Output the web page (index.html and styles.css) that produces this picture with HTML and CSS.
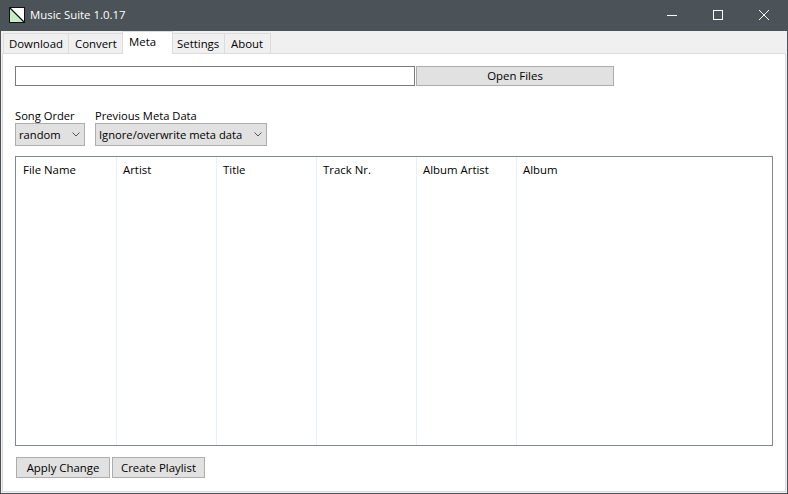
FILE: index.html
```html
<!DOCTYPE html>
<html>

<head>
    <meta charset="utf-8" />
    <title>Music Suite 1.0.17</title>
    <link rel="stylesheet" href="styles.css">
</head>

<body>
    <div class="window">
        <div class="titlebar">
            <svg class="app-icon" width="16" height="16" viewBox="0 0 16 16">
                <rect x="0.5" y="0.5" width="15" height="15" fill="#fff" stroke="#111" />
                <path d="M1 2 L14 15 L1 15 Z" fill="#c4eec4" />
                <path d="M1 1 L15 15" stroke="#111" stroke-width="1.2" />
            </svg>
            <span class="title">Music Suite 1.0.17</span>
            <div class="win-btn">
                <svg width="10" height="10" viewBox="0 0 10 10"><path d="M0 5.5 H10" stroke="#fff" /></svg>
            </div>
            <div class="win-btn">
                <svg width="10" height="10" viewBox="0 0 10 10"><rect x="0.5" y="0.5" width="9" height="9" fill="none" stroke="#fff" /></svg>
            </div>
            <div class="win-btn">
                <svg width="10" height="10" viewBox="0 0 10 10"><path d="M0 0 L10 10 M10 0 L0 10" stroke="#fff" /></svg>
            </div>
        </div>
        <div class="tabs">
            <div class="tab tab-download">Download</div>
            <div class="tab tab-convert">Convert</div>
            <div class="tab tab-meta active">Meta</div>
            <div class="tab tab-settings">Settings</div>
            <div class="tab tab-about">About</div>
        </div>
        <div class="panel">
            <div class="file-row">
                <input type="text" class="file-input" />
                <div class="btn open-btn">Open Files</div>
            </div>
            <div class="options">
                <div class="option">
                    <label>Song Order</label>
                    <div class="select select-order">
                        <span>random</span>
                        <svg width="8" height="5" viewBox="0 0 8 5"><path d="M0.5 0.5 L4 4 L7.5 0.5" fill="none" stroke="#555" /></svg>
                    </div>
                </div>
                <div class="option">
                    <label>Previous Meta Data</label>
                    <div class="select select-meta">
                        <span>Ignore/overwrite meta data</span>
                        <svg width="8" height="5" viewBox="0 0 8 5"><path d="M0.5 0.5 L4 4 L7.5 0.5" fill="none" stroke="#555" /></svg>
                    </div>
                </div>
            </div>
            <div class="table">
                <div class="col first">File Name</div>
                <div class="col">Artist</div>
                <div class="col">Title</div>
                <div class="col">Track Nr.</div>
                <div class="col">Album Artist</div>
                <div class="col last">Album</div>
            </div>
            <div class="actions">
                <div class="btn apply-btn">Apply Change</div>
                <div class="btn playlist-btn">Create Playlist</div>
            </div>
        </div>
    </div>
</body>

</html>
```

FILE: styles.css
```css
html, body {
    margin: 0;
    height: 100%;
}

body {
    font-size: 11.4px;
    font-family: "Open Sans", "Noto Sans", sans-serif;
    color: #000;
}

.window {
    width: 788px;
    height: 494px;
    box-sizing: border-box;
    display: flex;
    flex-direction: column;
    background-color: #f0f0f0;
    border: 1px solid #4b5359;
    border-top: 0;
}

.titlebar {
    height: 31px;
    flex: none;
    display: flex;
    align-items: flex-start;
    background-color: #4b5359;
    color: #fff;
    padding-left: 8px;
}

.app-icon {
    margin: 7px 5px 0 0;
}

.title {
    flex: 1;
    font-size: 11.4px;
    line-height: 30px;
}

.win-btn {
    width: 46px;
    height: 30px;
    display: flex;
    align-items: center;
    justify-content: center;
}

.tabs {
    height: 22px;
    flex: none;
    display: flex;
    align-items: flex-end;
    padding-left: 2px;
}

.tab {
    height: 20px;
    line-height: 19px;
    padding-left: 6px;
    box-sizing: border-box;
    border: 1px solid #dcdcdc;
    border-bottom: 0;
    margin-right: -1px;
}

.tab.active {
    height: 23px;
    line-height: 19px;
    background-color: #fff;
    position: relative;
    margin-bottom: -1px;
}

.tab-download {
    width: 66px;
    padding-left: 5px;
}

.tab-convert {
    width: 55px;
}

.tab-meta {
    width: 51px;
}

.tab-settings {
    width: 53px;
    padding-left: 4px;
}

.tab-about {
    width: 47px;
}

.panel {
    flex: 1;
    margin: 0 1px 1px 1px;
    border: 1px solid #dcdcdc;
    background-color: #fff;
    padding: 12px 12px 0 12px;
    display: flex;
    flex-direction: column;
}

.file-row {
    display: flex;
    gap: 1px;
}

.file-input {
    width: 400px;
    height: 20px;
    box-sizing: border-box;
    border: 1px solid #7a7a7a;
    margin: 0;
    padding: 0;
}

.btn {
    height: 20px;
    box-sizing: border-box;
    line-height: 18px;
    text-align: center;
    background-color: #e1e1e1;
    border: 1px solid #adadad;
}

.open-btn {
    width: 198px;
}

.options {
    display: flex;
    gap: 10px;
    margin-top: 21px;
}

.option label {
    display: block;
    height: 16px;
    line-height: 17px;
    font-size: 11.2px;
}

.select {
    height: 23px;
    box-sizing: border-box;
    display: flex;
    align-items: center;
    justify-content: space-between;
    white-space: nowrap;
    font-size: 11.2px;
    background-color: #e1e1e1;
    border: 1px solid #adadad;
    padding: 0 3px;
}

.select svg {
    margin-right: 1px;
}

.select-order {
    width: 70px;
}

.select-meta {
    width: 172px;
}

.table {
    height: 290px;
    box-sizing: border-box;
    margin-top: 10px;
    width: 758px;
    display: flex;
    border: 1px solid #828790;
}

.col {
    width: 100px;
    box-sizing: border-box;
    border-right: 1px solid #e8f1fb;
    padding: 5px 0 0 6px;
}

.col.first {
    width: 101px;
    padding-left: 7px;
}

.col.last {
    border-right: 0;
    flex: 1;
}

.actions {
    display: flex;
    gap: 2px;
    margin: 11px 0 0 1px;
}

.actions .btn {
    height: 21px;
    line-height: 19px;
}

.apply-btn {
    width: 94px;
}

.playlist-btn {
    width: 93px;
}
```
